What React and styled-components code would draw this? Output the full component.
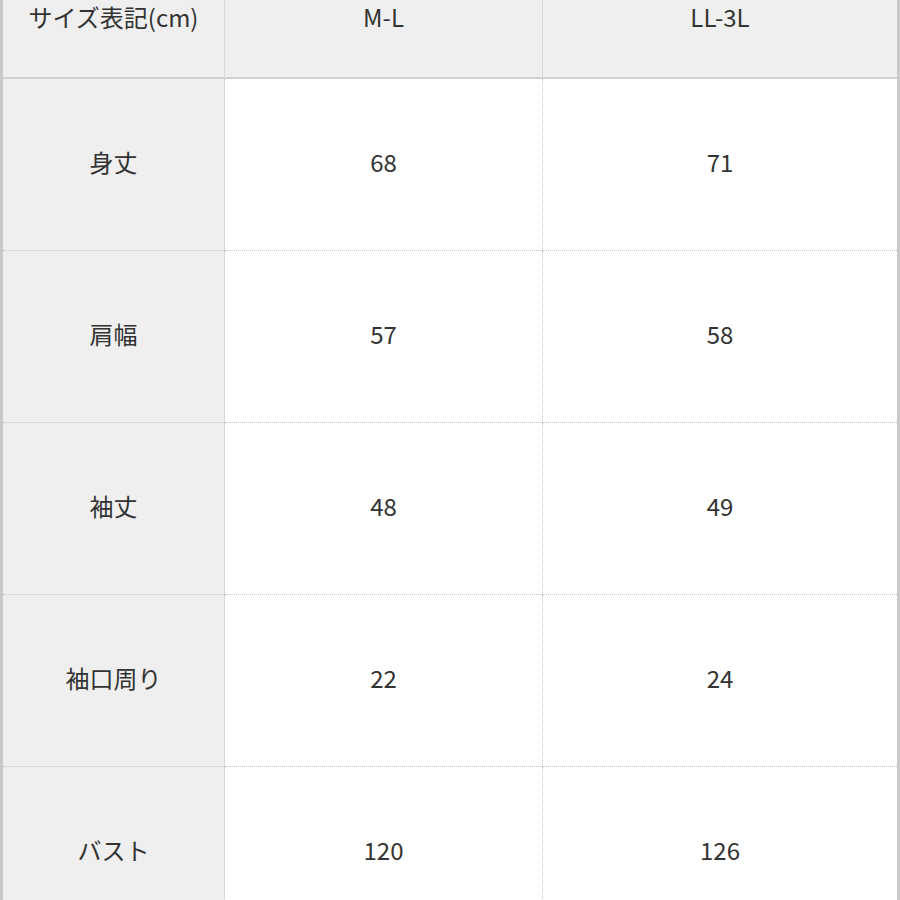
import React from "react";
import styled, { createGlobalStyle } from "styled-components";

const rows = [
  { label: "身丈", ml: "68", ll: "71" },
  { label: "肩幅", ml: "57", ll: "58" },
  { label: "袖丈", ml: "48", ll: "49" },
  { label: "袖口周り", ml: "22", ll: "24" },
  { label: "バスト", ml: "120", ll: "126" },
];

const GlobalStyle = createGlobalStyle`
  body {
    margin: 0;
    background: #ffffff;
    font-family: "Noto Sans CJK JP", "Noto Sans", sans-serif;
  }
`;

const Table = styled.div`
  width: 900px;
  box-sizing: border-box;
  border-left: 3px solid #c9c9c9;
  border-right: 3px solid #c9c9c9;
  display: grid;
  grid-template-columns: 222px 318px 1fr;
  color: #333333;
  font-size: 24px;
  height: 900px;
  overflow: hidden;
`;

const HeadCell = styled.div`
  background: #efefef;
  height: 77px;
  border-bottom: 2px solid #cfcfcf;
  border-right: ${(p) => (p.$last ? "none" : "1px dotted #c6c6c6")};
  display: flex;
  justify-content: center;
  align-items: flex-start;
  line-height: 34px;
`;

const Cell = styled.div`
  background: ${(p) => (p.$label ? "#efefef" : "#ffffff")};
  height: 165px;
  padding-bottom: 6px;
  box-sizing: content-box;
  border-bottom: 1px dotted #c6c6c6;
  border-right: ${(p) => (p.$last ? "none" : "1px dotted #c6c6c6")};
  display: flex;
  justify-content: center;
  align-items: center;
  line-height: 32px;
`;

export default function App() {
  return (
    <>
      <GlobalStyle />
      <Table>
        <HeadCell>サイズ表記(cm)</HeadCell>
        <HeadCell>M-L</HeadCell>
        <HeadCell $last>LL-3L</HeadCell>
        {rows.map((r) => (
          <React.Fragment key={r.label}>
            <Cell $label>{r.label}</Cell>
            <Cell>{r.ml}</Cell>
            <Cell $last>{r.ll}</Cell>
          </React.Fragment>
        ))}
      </Table>
    </>
  );
}
